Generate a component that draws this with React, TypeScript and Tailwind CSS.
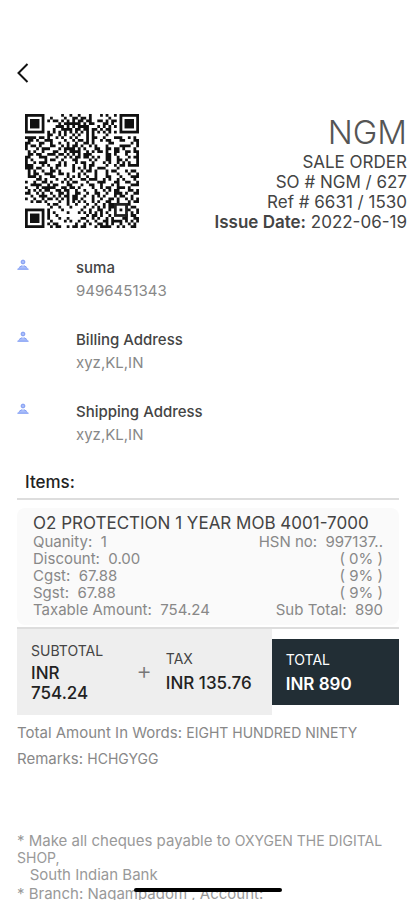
// 41 x 41 modules, the three corner markers are drawn separately
const QR_MODULES = [
  "00000000000001001001000100010100100000000",
  "00000000010000100110110100000010000000000",
  "00000000101101010101101100110101100000000",
  "00000000000010111111010110001101000000000",
  "00000000000111010101111000101010100000000",
  "00000000001001111011011011010110000000000",
  "00000000101010101010101010101010100000000",
  "00000000110010100101001010000100000000000",
  "11110110100101001010001011001000111001010",
  "01101001110000100101101010010110001100011",
  "11000110010010010010011010000011000000101",
  "10110100011001010110100101000100001111001",
  "10001011100010111101010001100110110100010",
  "01010010001100101111001010110100110011011",
  "01101100111011010101011100000110100010001",
  "11000111000100101011011010100110010001011",
  "10100001011001000110000101000110011010001",
  "10010111000010100010110010001010010101001",
  "11100010100110100100010110000100101101111",
  "11101100010100000101010100111000010000000",
  "01010010011010000100101101000101100010110",
  "01011001110011010001010001000100010001001",
  "01110100011000010101001001000110001000111",
  "00001101000100101000110111001010010100010",
  "10010011010001010110001000111000110011001",
  "00111100101100011000100110010001010000111",
  "10001011111001101101000010010110011101000",
  "01010101100110110010010001001010110001101",
  "11001010010011010011001001100100111010011",
  "00100111001010110110010010101000101100100",
  "10010010110101010110100010010011010010101",
  "00101101000010010101010010100110010001011",
  "00000000101100010010001001001011011011000",
  "00000000010010001000010010101011000110110",
  "00000000100001000000100100110010000011001",
  "00000000101000010001010101010100000000101",
  "00000000100100000000001011010010000010110",
  "00000000100010010000110010100101000110011",
  "00000000010000101001001001001101111010101",
  "00000000101100000010010100110101001001010",
  "00000000010110010110110001011110010100110",
]

const QR_MARKERS = [[0, 0], [34, 0], [0, 34]]

const PARTIES = [
  { title: "suma", detail: "9496451343" },
  { title: "Billing Address", detail: "xyz,KL,IN" },
  { title: "Shipping Address", detail: "xyz,KL,IN" },
]

const ITEM_LINES = [
  { left: "Quanity:  1", right: "HSN no:  997137.." },
  { left: "Discount:  0.00", right: "( 0% )" },
  { left: "Cgst:  67.88", right: "( 9% )" },
  { left: "Sgst:  67.88", right: "( 9% )" },
  { left: "Taxable Amount:  754.24", right: "Sub Total:  890" },
]

// one closed square per dark module, joined into a single path so no seams show
const qrPath = QR_MODULES.map((row, y) =>
  row.split("").map((cell, x) => (cell === "1" ? `M${x} ${y}h1v1h-1z` : "")).join("")
).join("")

function QrCode() {
  return (
    <svg viewBox="0 0 41 41" className="w-[114px] h-[114px] ml-2" fill="#111" role="img" aria-label="QR code">
      <path d={qrPath} />
      {QR_MARKERS.map(([x, y]) => (
        <g key={`${x}-${y}`}>
          <rect x={x + 0.5} y={y + 0.5} width="6" height="6" fill="none" stroke="#111" />
          <rect x={x + 1.8} y={y + 1.8} width="3.4" height="3.4" />
        </g>
      ))}
      <rect x="32.500" y="32.500" width="4" height="4" fill="#fff" stroke="#222" />
      <rect x="34" y="34" width="1" height="1" />
    </svg>
  )
}

function PersonIcon() {
  return (
    <svg viewBox="0 0 12 12" className="mt-[3px] w-3 h-3 shrink-0" fill="none" aria-hidden="true">
      <circle cx="6" cy="3" r="1.9" fill="#a9bdfa" stroke="#7f9bf3" />
      <path d="M.6 10.600C1 8.400 3.400 7.400 4.800 6.400h2.400C8.600 7.400 11 8.400 11.400 10.600z" fill="#a9bdfa" />
      <path d="M.4 10.200h11.200M2.200 8.400l2.600-1.600M9.800 8.400L7.200 6.800" stroke="#7f9bf3" />
    </svg>
  )
}

export default function App() {
  return (
    <main className="min-h-screen bg-white pl-[17px] pr-4 font-['Inter','Liberation_Sans',sans-serif] text-[#444]">
      <button type="button" aria-label="Back" className="pt-[62px] block">
        <svg viewBox="0 0 12 22" className="w-3 h-[22px]" fill="none" stroke="#111" strokeWidth="2">
          <path d="M10.500 2 1.500 11l9 9" />
        </svg>
      </button>

      <header className="mt-[30px] -mr-2 flex items-start justify-between">
        <QrCode />
        <div className="text-right text-[17px] leading-5">
          <h1 className="text-[33px] leading-9 font-light text-[#555]">NGM</h1>
          <p className="mt-0.5">SALE ORDER</p>
          <p>SO # NGM / 627</p>
          <p>Ref # 6631 / 1530</p>
          <p><span className="font-semibold">Issue Date:</span> 2022-06-19</p>
        </div>
      </header>

      <section className="mt-6 flex flex-col gap-[26px]">
        {PARTIES.map((p) => (
          <div key={p.title} className="flex gap-[47px]">
            <PersonIcon />
            <div className="text-[15px] leading-[23px]">
              <p className="font-medium">{p.title}</p>
              <p className="text-[#888]">{p.detail}</p>
            </div>
          </div>
        ))}
      </section>

      <h2 className="mt-6 ml-2 text-[17px] leading-6 font-medium text-[#222]">Items:</h2>
      <section className="mt-1 border-y-2 border-[#ddd] pt-2 pb-0.5">
        <div className="rounded-lg bg-[#fafafa] px-4 pt-[5px] pb-[7px]">
          <h3 className="text-[17px] leading-5 whitespace-nowrap">O2 PROTECTION 1 YEAR MOB 4001-7000</h3>
          {ITEM_LINES.map((line) => (
            <div key={line.left} className="flex justify-between whitespace-pre text-[15px] leading-[17px] text-[#888]">
              <span>{line.left}</span>
              <span>{line.right}</span>
            </div>
          ))}
        </div>
      </section>

      <section className="flex items-center">
        <div className="flex flex-1 items-center bg-[#eee] pl-3.5 pr-5 pt-2.5 pb-3">
          <div className="flex-1">
            <p className="text-sm leading-6">SUBTOTAL</p>
            <p className="w-16 text-[17px] leading-5 font-medium text-[#222]">INR 754.24</p>
          </div>
          <span className="px-3.5 text-2xl font-light text-[#777]">+</span>
          <div>
            <p className="text-sm leading-6">TAX</p>
            <p className="text-[17px] leading-6 font-medium whitespace-nowrap text-[#222]">INR 135.76</p>
          </div>
        </div>
        <div className="w-1/3 bg-[#222e35] px-3.5 py-[9px] text-white">
          <p className="text-sm leading-6">TOTAL</p>
          <p className="text-[17px] leading-6 font-semibold">INR 890</p>
        </div>
      </section>

      <section className="mt-[5px] text-[15px] leading-[26px] text-[#888]">
        <p>Total Amount In Words: <span className="text-sm leading-[26px]">EIGHT HUNDRED NINETY</span></p>
        <p>Remarks: <span className="text-sm leading-[26px]">HCHGYGG</span></p>
      </section>

      <section className="mt-[60px] text-[15px] leading-[17px] text-[#999]">
        <p>* Make all cheques payable to <span className="text-sm leading-[17px]">OXYGEN THE DIGITAL SHOP,</span></p>
        <p className="whitespace-pre">{"   South Indian Bank"}</p>
        <p className="mt-0.5">* Branch: Nagampadom , Account:</p>
      </section>

      <div className="fixed bottom-2 left-1/2 h-1 w-37 -translate-x-1/2 rounded-full bg-black" />
    </main>
  )
}
